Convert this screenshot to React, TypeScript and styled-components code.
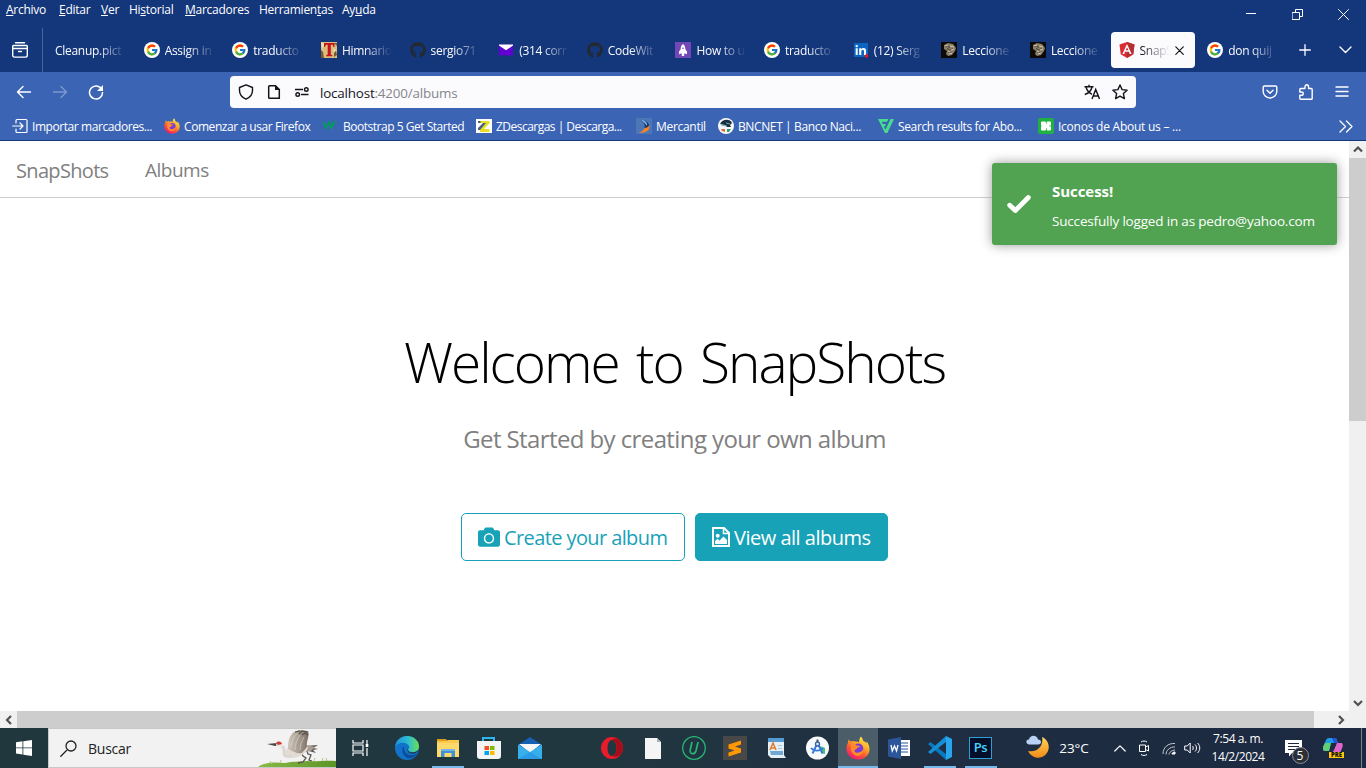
import React from 'react';
import styled, { createGlobalStyle, css } from 'styled-components';
import { FcGoogle } from 'react-icons/fc';
import { FaGithub, FaCamera } from 'react-icons/fa';

const GlobalStyle = createGlobalStyle`
  * { box-sizing: border-box; }
  body {
    margin: 0;
    overflow: hidden;
    font-family: "Open Sans", "Noto Sans", sans-serif;
    background: #fff;
  }
  svg { display: block; flex: none; }
`;

/* ---------- layout ---------- */

const Screen = styled.div`
  width: 1366px;
  height: 768px;
  display: flex;
  flex-direction: column;
  overflow: hidden;
`;

const Label = styled.span<{ $size?: number; $ls?: number; $w?: number; $color?: string }>`
  flex: none;
  white-space: pre;
  font-size: ${p => p.$size ?? 12}px;
  letter-spacing: ${p => p.$ls ?? -0.3}px;
  ${p => p.$w && css`width: ${p.$w}px;`}
  ${p => p.$color && css`color: ${p.$color};`}
  u { text-underline-offset: 1px; text-decoration-thickness: 1px; }
`;

const TitleBar = styled.header`
  height: 28px;
  flex: none;
  background: #14367a;
  color: #fff;
  display: flex;
  justify-content: space-between;
`;

const MenuList = styled.nav`
  display: flex;
  height: 20px;
  line-height: 20px;
  padding-left: 6px;
`;

const WindowButtons = styled.div`
  display: flex;
  width: 138px;
`;

const WindowButton = styled.div`
  width: 46px;
  height: 28px;
  display: flex;
  align-items: center;
  justify-content: center;
`;

const TabStrip = styled.div`
  height: 44px;
  flex: none;
  background: #14367a;
  color: #fff;
  display: flex;
  align-items: center;
`;

const FirefoxView = styled.div`
  width: 43px;
  height: 44px;
  flex: none;
  padding-left: 12px;
  display: flex;
  align-items: center;
  border-right: 1px solid #4766a0;
  margin-right: 4px;
`;

const Tab = styled.div<{ $active?: boolean }>`
  width: 84.64px;
  height: 36px;
  flex: none;
  margin-right: 4px;
  padding-left: 8px;
  display: flex;
  align-items: center;
  gap: 5px;
  border-radius: 4px;
  color: ${p => (p.$active ? '#15141a' : '#fbfbfe')};
  background: ${p => (p.$active ? '#fbfbfe' : 'transparent')};
`;

const TabTitle = styled.span<{ $w: number }>`
  width: ${p => p.$w}px;
  flex: none;
  white-space: pre;
  font-size: 12px;
  line-height: 20px;
  padding-top: 2px;
  letter-spacing: -0.28px;
  mask-image: linear-gradient(to left, transparent, #000 28px);
`;

const TabAction = styled.div<{ $w: number }>`
  width: ${p => p.$w}px;
  flex: none;
  display: flex;
  justify-content: center;
`;

const NavToolbar = styled.div`
  height: 40px;
  flex: none;
  background: #3c64b4;
  display: flex;
  align-items: center;
  color: #fff;
`;

const NavButtons = styled.div`
  display: flex;
  width: 230px;
  gap: 20px;
  padding-left: 16px;
`;

const UrlBar = styled.div`
  width: 906px;
  height: 32px;
  border-radius: 4px;
  background: #fbfbfe;
  color: #15141a;
  display: flex;
  align-items: center;
  padding: 0 8px;
  gap: 12px;
`;

const UrlText = styled.div`
  flex: 1;
  margin-left: -2px;
  padding-top: 2px;
  font-size: 13.4px;
  letter-spacing: -0.18px;
  color: #85858c;
  b { font-weight: 400; color: #15141a; }
`;

const ToolbarEnd = styled.div`
  flex: 1;
  display: flex;
  gap: 20px;
  justify-content: flex-end;
  padding-right: 16px;
`;

const BookmarkBar = styled.div`
  height: 29px;
  flex: none;
  background: #3c64b4;
  border-bottom: 1px solid #14367a;
  color: #fff;
  display: flex;
  align-items: center;
  padding: 0 13px 0 12px;
`;

const Bookmark = styled.div<{ $w: number }>`
  width: ${p => p.$w}px;
  flex: none;
  display: flex;
  align-items: center;
  gap: 4px;
`;

const Spacer = styled.div`
  flex: 1;
`;

const Viewport = styled.div`
  height: 570px;
  flex: none;
  display: flex;
`;

const Page = styled.main`
  position: relative;
  width: 1349px;
  background: #fff;
  display: flex;
  flex-direction: column;
  align-items: center;
`;

const SiteNav = styled.nav`
  align-self: stretch;
  height: 57px;
  flex: none;
  border-bottom: 1px solid #ccc;
  display: flex;
  align-items: center;
  padding: 2px 0 0 16px;
  color: #808080;
`;

const Headline = styled.h1`
  margin: 122px 0 0;
  height: 84px;
  line-height: 84px;
  font-size: 55px;
  font-weight: 300;
  letter-spacing: -2px;
  word-spacing: 5px;
  color: #000;
  white-space: nowrap;
`;

const Tagline = styled.p`
  margin: 17px 0 0;
  height: 36px;
  line-height: 36px;
  font-size: 24px;
  letter-spacing: -0.6px;
  color: #808080;
  white-space: nowrap;
`;

const Actions = styled.div`
  margin-top: 56px;
  display: flex;
  gap: 10px;
`;

const ActionButton = styled.button<{ $filled?: boolean; $w: number }>`
  width: ${p => p.$w}px;
  height: 48px;
  padding: 0 0 0 16px;
  display: flex;
  align-items: center;
  gap: 4px;
  border: 1px solid #17a2b8;
  border-radius: 5px;
  font-family: inherit;
  background: ${p => (p.$filled ? '#17a2b8' : '#fff')};
  color: ${p => (p.$filled ? '#fff' : '#17a2b8')};
`;

const Toast = styled.aside`
  position: absolute;
  top: 22px;
  right: 12px;
  width: 345px;
  height: 82px;
  border-radius: 3px;
  background: #51a351;
  box-shadow: 0 0 12px #999;
  color: #fff;
  display: flex;
  align-items: center;
  padding-left: 15px;
  gap: 21px;
`;

const ToastBody = styled.div`
  display: flex;
  flex-direction: column;
  line-height: 20px;
  gap: 10px;
  padding-top: 4px;
`;

const ToastTitle = styled.strong`
  font-size: 15px;
  letter-spacing: -0.05px;
`;

const Scroll = styled.div<{ $vertical?: boolean }>`
  flex: none;
  display: flex;
  flex-direction: ${p => (p.$vertical ? 'column' : 'row')};
  background: #f0f0f0;
  width: ${p => (p.$vertical ? '17px' : '100%')};
  height: ${p => (p.$vertical ? '570px' : '17px')};
  justify-content: space-between;
`;

const ScrollArrow = styled.div`
  width: 17px;
  height: 17px;
  display: flex;
  align-items: center;
  justify-content: center;
`;

const ScrollTrack = styled.div`
  flex: 1;
`;

const Thumb = styled.div<{ $length: number; $vertical?: boolean }>`
  background: #cdcdcd;
  width: ${p => (p.$vertical ? '17px' : `${p.$length}px`)};
  height: ${p => (p.$vertical ? `${p.$length}px` : '17px')};
`;

const Taskbar = styled.footer`
  height: 40px;
  flex: none;
  display: flex;
  color: #fff;
  background: linear-gradient(90deg, #20373e 0%, #213740 45%, #1f2e42 68%, #1c2941 100%);
`;

const TaskSlot = styled.div<{ $w?: number; $active?: boolean; $line?: string; $pad?: string }>`
  width: ${p => p.$w ?? 41}px;
  height: 40px;
  flex: none;
  padding: ${p => p.$pad ?? '0'};
  display: flex;
  align-items: center;
  justify-content: center;
  background-color: ${p => (p.$active ? '#4c5d6a' : 'transparent')};
  ${p => p.$line && css`
    background-image: linear-gradient(#76b9ed, #76b9ed);
    background-size: ${p.$line} 2px;
    background-position: center bottom;
    background-repeat: no-repeat;
  `}
`;

const SearchBox = styled.div`
  width: 288px;
  height: 40px;
  background: #f2f2f2;
  border: 1px solid #c4c8c9;
  border-right: 0;
  color: #222;
  display: flex;
  align-items: center;
  padding-left: 11px;
  gap: 11px;
`;

const Clock = styled.div`
  width: 68px;
  display: flex;
  flex-direction: column;
  align-items: center;
  justify-content: center;
  line-height: 18px;
`;

const DesktopEdge = styled.div`
  width: 5px;
  border-left: 1px solid #7b8391;
`;

/* ---------- icons ---------- */

const Stroke = ({ w = 16, h = 16, sw = 1.2, d, color = 'currentColor' }: { w?: number; h?: number; sw?: number; d: string; color?: string }) => (
  <svg width={w} height={h} viewBox={`0 0 ${w} ${h}`} fill="none" stroke={color} strokeWidth={sw} strokeLinecap="round" strokeLinejoin="round"><path d={d} /></svg>
);

const FileImage = () => (
  <svg width="18" height="20" viewBox="0 0 18 20"><path d="M1 1h11l5 5v13H1z" fill="none" stroke="currentColor" strokeWidth="2" /><path d="M11.500 1v5.500H17" fill="none" stroke="currentColor" strokeWidth="1.500" /><circle cx="5.700" cy="8.700" r="2" fill="currentColor" /><path d="M3 17v-3l2.500-2.300 2 1.800 4-4L15 13v4z" fill="currentColor" /></svg>
);

const Google = () => (
  <svg width="16" height="16" viewBox="0 0 16 16"><circle cx="8" cy="8" r="8" fill="#fff" /><g transform="translate(1.500 1.500)"><FcGoogle size={13} /></g></svg>
);

const Himnario = () => (
  <svg width="16" height="16" viewBox="0 0 16 16"><path fill="#d8bd7c" d="M0 0h16v16H0z" /><path fill="#795b2c" d="M0 8l2 2 1 6H0zM13 1h3v3l-2-2zM13 10l2-1 1 4-3 2z" /><path fill="#f2dfae" d="M0 0l4 2-3 5zM12 6l3 2-2 3z" /><path fill="#c3141b" d="M3 1h10.500v4h-1l-.8-2.200H9.800v9.700l1.500.8v1H5.200v-1l1.500-.8V2.800H4.800L4 5H3z" /></svg>
);

const YahooMail = () => (
  <svg width="16" height="16" viewBox="0 0 16 16"><path fill="#6001d2" d="M1 2.500h14v11H1z" /><path fill="#fff" d="M1 2.500h14v1L8 8.300 1 3.500z" /></svg>
);

const Rocket = () => (
  <svg width="16" height="16" viewBox="0 0 16 16"><path fill="#7248b9" d="M0 0h16v16H0z" /><path fill="#fff" d="M8 2c2 1.600 2.400 3.400 2.300 5.300L12 9.500v2.700l-2-.7H6l-2 .7V9.500l1.700-2.200C5.600 5.400 6 3.600 8 2zM6.800 11h2.400v3H6.800z" /><circle cx="8" cy="6.300" r=".8" fill="#7248b9" /></svg>
);

const LinkedIn = () => (
  <svg width="16" height="16" viewBox="0 0 16 16"><path fill="#0a66c2" d="M1 1h14v14H1z" /><path fill="#fff" d="M2.700 6.200h2V13h-2zM6.200 6.200h2v1c.5-.8 1.200-1.200 2.200-1.200 2 0 2.700 1.200 2.700 3.200V13H11V9.500c0-1-.3-1.700-1.200-1.700-1 0-1.500.7-1.500 1.700V13H6.200z" /><circle cx="3.700" cy="4.100" r="1.200" fill="#fff" /><circle cx="13.500" cy="14" r="1.800" fill="#f01414" /></svg>
);

const Statue = () => (
  <svg width="16" height="16" viewBox="0 0 16 16"><path fill="#0d0a08" d="M0 0h16v16H0z" /><path fill="#8b8069" d="M3 3l4-2 5 1 3 4-1 3-3 4-4 1-2-2 1-3-3-2z" /><path d="M4 5l3-1 2 1-3 2 3 1 3-2M7 10l2 1 2-1" stroke="#4d4435" strokeWidth=".8" fill="none" /><path d="M4 4l3-1M9 4l4 1M7 9l2 1M10 8l3-1M8 12l3-1" stroke="#d0c6ab" fill="none" /></svg>
);

const Angular = () => (
  <svg width="16" height="16" viewBox="0 0 16 16"><path fill="#dd2b32" d="M8 0l7.500 2.600-1.200 9.600L8 16l-6.300-3.800L.5 2.600z" /><path fill="#b52e31" d="M8 0l7.500 2.600-1.200 9.600L8 16z" /><path fill="#fff" fillRule="evenodd" d="M8 2l4.600 10h-1.800l-.9-2.300H6.100L5.200 12H3.400zM8 5.200L6.700 8.300h2.600z" /></svg>
);

const Firefox = ({ size = 16 }: { size?: number }) => (
  <svg width={size} height={size} viewBox="0 0 24 24">
    <defs>
      <linearGradient id="ffBody" x1="0.8" y1="0" x2="0.2" y2="1"><stop offset="0" stopColor="#fff04a" /><stop offset=".35" stopColor="#ffad28" /><stop offset=".65" stopColor="#ff5034" /><stop offset="1" stopColor="#ec1280" /></linearGradient>
    </defs>
    <path fill="url(#ffBody)" d="M15 .5c1.200 1.300 1.900 2.700 2.100 4.200 2 .8 2.700 1.800 3.300 2.700l.2-2.200c3.400 4.500 4 9.700 1 13.800C17.400 24.600 8 25.200 3.300 20-.6 15.700.2 9.600 2 6.800l.3-3.300 2.500 2.100C6 4.900 7.400 4.900 8.500 5.500c2-.2 3.300-.1 4.500.7 0-2 .5-4 2-5.700z" />
    <circle cx="12.300" cy="12.500" r="5" fill="#7b3bd9" />
    <path fill="#ff8a2c" d="M5 8.500c2.500-1.600 4.500-.2 5.500 1l3.500.5c.1 1.100-2.100 1.500-2.900 2-.6 1.900-2.700 1.300-2.600 2.900.4 1.900 3.600 2.500 5.300 1.100 1.500-.1 2.800-1.200 3.300-2.700 1.200 3-1.500 6.500-5 6.700C7 20 3.500 15 5 8.500z" />
  </svg>
);

const W3 = () => (
  <svg width="17" height="16" viewBox="0 0 17 16"><path d="M1.500 4l2.500 6L7 4.500l2.500 5.500L12 4" fill="none" stroke="#069a62" strokeWidth="2" /><path d="M12 3.500h2.500l-1 1.500 1 1" fill="none" stroke="#069a62" strokeWidth=".8" /></svg>
);

const ZIcon = () => (
  <svg width="16" height="16" viewBox="0 0 16 16"><path fill="#fff" d="M0 1h16v14H0z" /><path fill="#4a5f86" d="M2 3h11v2l-7 7H2v-2l5-5H2z" /><path fill="#e8e020" d="M4.500 3h9v2l-5.500 6h5.500v3H4v-2l6-7H4.500z" /></svg>
);

const Mercantil = () => (
  <svg width="16" height="16" viewBox="0 0 16 16"><path fill="#4c76b5" d="M0 0h16v16H0z" /><path fill="#12366e" d="M4 1c7 1 10 5 9 9l-5 2c2-5 0-8-4-11z" /><path fill="#7db5ee" d="M4 1c5 1 8 4 7 7-2-3-4-5-7-7z" /><path fill="#f58327" d="M13.500 7c1 5-3 8-11 8 3-1 5-3 6-5 2 0 4-1 5-3z" /></svg>
);

const Bnc = () => (
  <svg width="16" height="16" viewBox="0 0 16 16"><circle cx="8" cy="8" r="8" fill="#f6f7f8" /><path fill="#182d3f" d="M2 6c2-5 10-6 12-1l-2 2 1 2H9L7 7z" /><path d="M3 7l6 1M8 5l4 1" stroke="#68b2ab" /><path fill="#e46c35" d="M3 11h4v3L4 13z" /><path fill="#2f9c70" d="M9 11h4l-2 3H9z" /></svg>
);

const VF = () => (
  <svg width="16" height="16" viewBox="0 0 16 16"><path fill="#48dd8c" d="M0 1h10.500L9 3.800H3.800L4.700 6H8L7 8.500H5.800l1.700 3.300L12.500 1H16L9.300 15H7z" /></svg>
);

const Icons8 = () => (
  <svg width="16" height="16" viewBox="0 0 16 16"><rect width="16" height="16" rx="2" fill="#1fb141" /><g fill="#fff"><rect x="3" y="3.500" width="5" height="4.600" rx="1" /><rect x="8.600" y="3.500" width="4.400" height="4.300" rx="1" /><rect x="3" y="8" width="5" height="4.500" rx="1" /><rect x="8.600" y="8.300" width="4.400" height="4.200" rx="1" /><path d="M5 6h6v4H5z" /></g></svg>
);

const Translate = () => (
  <svg width="17" height="16" viewBox="0 0 17 16" fill="none" stroke="currentColor" strokeWidth="1.400"><path d="M1.500 2.700h9M6 .7v2M3 3c1 3.800 3 5.800 6 7.300M9 3C8.300 6.500 5.500 9.200 1.800 10.500M9 15l3.700-9.500L16.500 15M10.500 12h4.500" /></svg>
);

const Crane = () => (
  <svg width="78" height="38" viewBox="0 0 78 38">
    <defs>
      <linearGradient id="grass" x1="0" x2="1"><stop offset="0" stopColor="#8aba45" /><stop offset="1" stopColor="#5d9427" /></linearGradient>
      <linearGradient id="wing" x1="0" x2="1"><stop offset="0" stopColor="#cfc5ba" /><stop offset=".6" stopColor="#a1968a" /><stop offset="1" stopColor="#786e64" /></linearGradient>
    </defs>
    <path fill="url(#grass)" d="M0 38c7-5 17-5 27-4 8-2 15-1 22-2 10 1 17-1 29 0v6z" />
    <path d="M56 32l1-3M64 32l1-3M69 32l-1-3M14 35l-2-3M22 34l1-3" stroke="#b1cf86" />
    <path d="M43 23l2 4 3 2-3 4-5 1M49 22l1 3 3 1-2 5 3 1" fill="none" stroke="#5a5450" strokeWidth="1.300" />
    <path fill="#5a534c" d="M47 17l13-1-5 3 5 1-5 1 3 3-11-3z" />
    <path fill="#a99e92" d="M44 15l13 3-4 4-8 1z" />
    <path fill="#e3dcd4" d="M29 20c3-5 10-7 17-5l4 3c-1 6-9 11-16 11-4 0-8-2-8-5z" />
    <path fill="url(#wing)" d="M30 20c0-8 1-13 6-17l5-2 9 1c2 5-2 10-1 16l-5 6c-5 1-8-1-14-4z" />
    <path d="M33 18c1-6 2-10 6-13M37 21c0-6 2-11 5-15M42 21c0-5 2-9 4-13" fill="none" stroke="#e0d7cc" strokeWidth=".6" />
    <path d="M37 3l5-1M41 5l3-3 5 1M44 6l3-2 3 2" fill="none" stroke="#56504a" strokeWidth="1.200" />
    <path d="M23 17c4 1 3 4 3 7 0 3 2 4 6 3" fill="none" stroke="#ddd7d1" strokeWidth="3" strokeLinecap="round" />
    <path fill="#4a4642" d="M9 15l10-1 2 2-4 1z" />
    <path fill="#eee9e5" d="M18 15c1-2 6-2 7 1l-2 3-4-1z" />
    <path fill="#cf3a36" d="M18 14c2-2 5-2 6 1l-4 1z" />
  </svg>
);

const TaskView = () => (
  <svg width="17" height="16" viewBox="0 0 17 16" fill="none" stroke="#fff" strokeWidth="1.200"><path d="M1 0v3h10V0M1 16v-3h10v3M1 5h10v6H1zM15 0v4M15 8v8" /><path d="M13.700 4h2.600v3h-2.600z" fill="#fff" stroke="none" /></svg>
);

const Edge = () => (
  <svg width="24" height="24" viewBox="0 0 24 24">
    <defs><linearGradient id="edgeTop" x1="0" x2="1"><stop offset="0" stopColor="#1b91dc" /><stop offset=".55" stopColor="#2ebdd1" /><stop offset="1" stopColor="#68df52" /></linearGradient></defs>
    <circle cx="12" cy="12" r="12" fill="#1172c7" />
    <path fill="url(#edgeTop)" d="M0 11C1 4 6 0 12 0c7 0 12 5 12 10 0 4-3 6-6.500 6-3 0-4.500-1.300-4.500-2.500 1-1 1.500-2 1-3.500C12.500 6 4 5 0 11z" />
    <path fill="#0b4c9c" d="M9 10c-3 3-2 9 3 12 4 1 8-1 10-4-7 3-14 0-13-8z" />
    <path fill="#213740" d="M13.500 10.500c-1.500 2-.5 5.500 3 6 3 .3 5.500-.8 7.200-2.700-1 3-4 4.200-6.700 4-3.500-.3-6-3.300-3.500-7.300z" />
  </svg>
);

const Explorer = () => (
  <svg width="22" height="20" viewBox="0 0 22 20"><path fill="#dd9b1e" d="M0 1h9l2 3H0z" /><path fill="#ffd96b" d="M0 3h22v16H0z" /><path fill="#f9c94c" d="M0 3h9l2-1h11v3H0z" /><path fill="#3f91d8" d="M4 11h14v8h-3.500v-4h-7v4H4z" /><path fill="#71b4e8" d="M4 11h14v2H4z" /></svg>
);

const Store = () => (
  <svg width="24" height="24" viewBox="0 0 24 24"><path d="M6 6V2h11v4" fill="none" stroke="#2fb5ed" strokeWidth="2" /><path fill="#f3f4f5" d="M0 5h24v15c0 2-1 3-3 3H3c-2 0-3-1-3-3z" /><path fill="#f25022" d="M7.500 10H12v4H7.500z" /><path fill="#7fba00" d="M13 10h4.500v4H13z" /><path fill="#00a4ef" d="M7.500 15H12v4H7.500z" /><path fill="#ffb900" d="M13 15h4.500v4H13z" /></svg>
);

const Mail = () => (
  <svg width="24" height="23" viewBox="0 0 24 23"><path fill="#1560b5" d="M0 8L12 0l12 8v4H0z" /><path fill="#f4f6f8" d="M1 7h22L12 16z" /><path fill="#37afea" d="M0 7.500L12 15l12-7.500V22H0z" /><path fill="#2a9be4" d="M0 22l12-7 12 7z" /></svg>
);

const Opera = () => (
  <svg width="22" height="22" viewBox="0 0 22 22"><path fill="#e81c2b" fillRule="evenodd" d="M11 0a11 11 0 100 22 11 11 0 000-22zm0 3c3 0 4.500 3.800 4.500 8S14 19 11 19s-4.500-3.800-4.500-8S8 3 11 3z" /><path fill="#a60d1b" d="M11 3c3-2 7-2 8 1 4 5 4 10 0 14-2 2-5 2-8 1 3 0 4.500-3.800 4.500-8S14 3 11 3z" /></svg>
);

const Doc = () => (
  <svg width="16" height="21" viewBox="0 0 16 21"><path fill="#f5f5f5" d="M0 0h12l4 4v17H0z" /><path fill="#aeb3b5" d="M12 0l4 4h-4z" /></svg>
);

const UninstallerIcon = () => (
  <svg width="24" height="24" viewBox="0 0 24 24" fill="none" stroke="#25b774"><circle cx="12" cy="12" r="11.300" strokeWidth="1.300" /><path d="M10 6l-1.800 8c-.8 4.500 4.500 5 5.700 1l2.200-9" strokeWidth="1.700" /></svg>
);

const Sublime = () => (
  <svg width="24" height="24" viewBox="0 0 24 24"><path fill="#484848" d="M0 0h24v24H0z" /><path fill="#ff9800" d="M5.500 8.500L18 4.500v4l-6 2 6 2v4L5.500 20.500v-4l6-2-6-2z" /></svg>
);

const WordPad = () => (
  <svg width="20" height="22" viewBox="0 0 20 22"><path fill="#e4eff6" d="M2 1h16v17l2 3H5l-3-3z" /><path fill="#549bd1" d="M2 1h16v4H2z" /><path fill="#a7c7da" d="M12 8h4v1h-4zM12 11h4v1h-4z" /><path fill="#6da9d4" d="M4 14h13v4H5z" /><path d="M4 13l3-7 3 7M5 11h4" fill="none" stroke="#e17b2d" strokeWidth="1.500" /></svg>
);

const AndroidStudio = () => (
  <svg width="23" height="24" viewBox="0 0 23 24"><circle cx="11.500" cy="12" r="11.500" fill="#f9fafb" /><path fill="#44c27c" d="M14 10l5 2v6l-4-1z" /><path d="M11.500 7L6.500 17.500M11.500 7l5 10.500M5 12c3 3.500 9 3.500 12 0" fill="none" stroke="#3978dc" strokeWidth="1.900" /><circle cx="11.500" cy="8" r="2" fill="#dbe8fb" stroke="#3c62a8" strokeWidth="1.300" /><path d="M11.500 3.500V6" stroke="#455568" strokeWidth="2" /></svg>
);

const Word = () => (
  <svg width="22" height="22" viewBox="0 0 22 22"><path fill="#fff" d="M12 3h10v16H12z" /><path stroke="#2b579a" d="M13 6h7M13 9h7M13 12h7M13 15h7" /><path fill="#2b579a" d="M0 2.500L13 0v22L0 19.500z" /><path d="M3 8l1.300 6L6.500 9l2 5L10 8" fill="none" stroke="#fff" strokeWidth="1.300" /></svg>
);

const VsCode = () => (
  <svg width="24" height="24" viewBox="0 0 24 24"><path fill="#0879bf" d="M0 8l2.500-2L18 18v6z" /><path fill="#168ed5" d="M0 16l2.500 2L18 6V0z" /><path fill="#27a5ed" d="M18 0l6 3v18l-6 3z" /></svg>
);

const PhotoshopBox = styled.div`
  width: 23px;
  height: 22px;
  border: 1px solid #2f9fd4;
  background: #041029;
  color: #4bd0ff;
  font-size: 13px;
  line-height: 19px;
  font-weight: 600;
  letter-spacing: -0.3px;
  text-align: center;
`;

const Weather = () => (
  <svg width="24" height="24" viewBox="0 0 24 24"><defs><linearGradient id="moon" x1="0" y1="0" x2="0" y2="1"><stop offset="0" stopColor="#ffd55a" /><stop offset="1" stopColor="#f08a18" /></linearGradient></defs><path fill="url(#moon)" d="M16 2c9 4 9 16 0 20-5 2-11 0-14-6 9 2 16-5 14-14z" /><path fill="#b9d2f4" d="M3 9.500C-1 8.500 0 4 3 4.500 4-.5 11-.5 12 4.500c4 0 4 5 0 5z" /></svg>
);

const MeetNow = () => (
  <svg width="12" height="16" viewBox="0 0 12 16" fill="none" stroke="#fff"><path d="M1.500 5h6v6.500h-6zM7.500 7l3-1.500V11l-3-1.500M3 2c2-1.300 4-1.300 6 0M3 14.500c2 1.300 4 1.300 6 0" /></svg>
);

const Wifi = () => (
  <svg width="14" height="14" viewBox="0 0 14 14" fill="none" stroke="#c5cbd3"><path d="M1 13C1 6.500 6 2 13 2.500M4 13.500c0-4 4-8 9-7.500M7 13.500c0-2 3-4.500 6-4.500" /><path d="M10 13c0-1 1-2 3-2v2z" fill="#fff" stroke="#fff" /></svg>
);

const Volume = () => (
  <svg width="17" height="14" viewBox="0 0 17 14" fill="none" stroke="#fff"><path d="M.7 5h2.500l3-3v10l-3-3H.700zM8.500 5c1 1 1 3 0 4M11 3.500c2 2 2 5 0 7M13.500 2c3 3 3 7 0 10" /></svg>
);

const NoticeWrap = styled.div`
  position: relative;
  width: 17px;
  height: 17px;
`;

const NoticeBadge = styled.span`
  position: absolute;
  left: 7px;
  top: 7px;
  width: 17px;
  height: 17px;
  border-radius: 50%;
  border: 1px solid #8b8f96;
  background: #2d3036;
  font-size: 12px;
  line-height: 15px;
  text-align: center;
`;

const CopilotWrap = styled.div`
  position: relative;
  width: 22px;
  height: 22px;
`;

const PreBadge = styled.span`
  position: absolute;
  left: 6px;
  bottom: 1px;
  width: 15px;
  height: 6px;
  background: #ffc60a;
  color: #111;
  font-size: 6px;
  line-height: 6px;
  font-weight: 800;
  text-align: center;
`;

const Chevron = ({ dir }: { dir: 'up' | 'down' | 'left' | 'right' }) => {
  const paths = { up: 'M1 6.500L5 2.500 9 6.500', down: 'M1 3L5 7 9 3', left: 'M7 1L3 5l4 4', right: 'M3 1l4 4-4 4' };
  return <svg width="10" height="10" viewBox="0 0 10 10" fill="none" stroke="#505050" strokeWidth="2.200"><path d={paths[dir]} /></svg>;
};

/* ---------- data ---------- */

const menus: [string, string, string, number][] = [
  ['', 'A', 'rchivo', 53], ['', 'E', 'ditar', 42], ['', 'V', 'er', 28], ['Hi', 's', 'torial', 56],
  ['', 'M', 'arcadores', 74], ['Herramien', 't', 'as', 83], ['Ay', 'u', 'da', 40],
];

const Hub = () => <FaGithub size={16} color="#24292f" />;

const tabs: { title: string; icon?: React.ReactNode; active?: boolean }[] = [
  { title: 'Cleanup.pict' },
  { title: 'Assign in', icon: <Google /> },
  { title: 'traducto', icon: <Google /> },
  { title: 'Himnario', icon: <Himnario /> },
  { title: 'sergio71', icon: <Hub /> },
  { title: '(314 corr', icon: <YahooMail /> },
  { title: 'CodeWit', icon: <Hub /> },
  { title: 'How to u', icon: <Rocket /> },
  { title: 'traducto', icon: <Google /> },
  { title: '(12) Serg', icon: <LinkedIn /> },
  { title: 'Leccione', icon: <Statue /> },
  { title: 'Leccione', icon: <Statue /> },
  { title: 'SnapS', icon: <Angular />, active: true },
  { title: 'don quij', icon: <Google /> },
];

const bookmarks: { title: string; icon: React.ReactNode; w: number; ls: number }[] = [
  { title: 'Importar marcadores...', w: 152, ls: -0.43, icon: <Stroke d="M4 5V2.500c0-.6.400-1 1-1h9c.6 0 1 .4 1 1v11c0 .6-.4 1-1 1H5c-.6 0-1-.4-1-1V11M.7 8h10M8 5l3 3-3 3" /> },
  { title: 'Comenzar a usar Firefox', w: 158, ls: -0.43, icon: <Firefox /> },
  { title: 'Bootstrap 5 Get Started', w: 154, ls: -0.48, icon: <W3 /> },
  { title: 'ZDescargas | Descarga...', w: 160, ls: -0.52, icon: <ZIcon /> },
  { title: 'Mercantil', w: 82, ls: -0.3, icon: <Mercantil /> },
  { title: 'BNCNET | Banco Naci...', w: 160, ls: -0.38, icon: <Bnc /> },
  { title: 'Search results for Abo...', w: 160, ls: -0.36, icon: <VF /> },
  { title: 'Iconos de About us – ...', w: 150, ls: -0.24, icon: <Icons8 /> },
];

/* ---------- app ---------- */

export default function App() {
  return (
    <Screen>
      <GlobalStyle />
      <TitleBar>
        <MenuList>
          {menus.map(([a, key, b, w]) => <Label key={a + key + b} $w={w} $ls={-0.26}>{a}<u>{key}</u>{b}</Label>)}
        </MenuList>
        <WindowButtons>
          <WindowButton><Stroke w={10} h={10} sw={1} d="M0 4.500h10" /></WindowButton>
          <WindowButton><Stroke w={11} h={11} sw={1} d="M.5 3.500h7v7h-7zM3.500 3V.5h7v7H8" /></WindowButton>
          <WindowButton><Stroke w={11} h={11} sw={1} d="M.5.5l10 10M10.500.5l-10 10" /></WindowButton>
        </WindowButtons>
      </TitleBar>

      <TabStrip>
        <FirefoxView><Stroke sw={1.4} d="M3.500.7h9M1.500 3.500h13c.5 0 .8.300.8.800v9c0 1-.8 1.800-1.800 1.800h-11C1.500 15.100.7 14.300.7 13.300v-9c0-.5.3-.8.8-.8zM.8 6.500h14.400M6.500 9.500h3" /></FirefoxView>
        {tabs.map((t, i) => (
          <Tab key={i} $active={t.active}>
            {t.icon}
            <TabTitle $w={t.active ? 30 : t.icon ? 50 : 71}>{t.title}</TabTitle>
            {t.active && <Stroke w={9} h={9} d="M.8.8l7.500 7.500M8.300.8L.8 8.300" />}
          </Tab>
        ))}
        <TabAction $w={35}><Stroke w={12} h={12} sw={1.3} d="M6 .7v10.600M.7 6h10.600" /></TabAction>
        <TabAction $w={45}><Stroke w={13} h={8} sw={1.4} d="M1 1l5.500 5.500L12 1" /></TabAction>
      </TabStrip>

      <NavToolbar>
        <NavButtons>
          <Stroke sw={1.4} d="M1.500 8h13M7 2.500L1.500 8 7 13.500" />
          <Stroke sw={1.4} color="#7d98cf" d="M1.500 8h13M9 2.500L14.500 8 9 13.500" />
          <svg width="16" height="16" viewBox="0 0 16 16" fill="none" stroke="#fff" strokeWidth="1.500"><path d="M13.800 5.500A6.500 6.500 0 1014.500 8" /><path fill="#fff" stroke="none" d="M15 1v6H9z" /></svg>
        </NavButtons>
        <UrlBar>
          <Stroke sw={1.4} d="M8 .8l6.500 2.700v3C14.500 10.500 12 13.500 8 15.200 4 13.500 1.500 10.500 1.500 6.500v-3z" />
          <svg width="16" height="16" viewBox="0 0 16 16"><path d="M3.500 1.700h6L13.300 5.500v8.800H3.500c-.5 0-.8-.3-.8-.8v-11c0-.5.3-.8.8-.8z" fill="none" stroke="#15141a" strokeWidth="1.500" /><path d="M9 1v5h5z" fill="#15141a" /></svg>
          <svg width="16" height="16" viewBox="0 0 16 16" fill="none" stroke="#15141a" strokeWidth="1.400"><path d="M1 5.500h8M7 10.500h7.500" /><circle cx="12.300" cy="5.500" r="1.800" /><circle cx="3.700" cy="10.500" r="1.800" /></svg>
          <UrlText><b>localhost</b>:4200/albums</UrlText>
          <Translate />
          <Stroke sw={1.4} d="M8 1l2.100 4.600 5 .6-3.700 3.400 1 5L8 12.100l-4.400 2.500 1-5L.9 6.200l5-.6z" />
        </UrlBar>
        <ToolbarEnd>
          <Stroke sw={1.4} d="M2.500 2h11c.8 0 1.300.5 1.300 1.300V7.500a6.800 6.500 0 01-13.600 0V3.300C1.200 2.500 1.700 2 2.500 2zM5 6.300L8 9.200l3-2.900" />
          <Stroke sw={1.4} d="M5 4.500h2V3c0-3 3.600-3 3.600 0v1.500h2.700c.5 0 .9.300.9.900v9c0 .5-.4.900-.9.900H2.800c-.6 0-1-.4-1-.9v-3.100h1.500c2.600 0 2.600-3.300 0-3.300H1.800V5.400c0-.6.4-.9 1-.9z" />
          <Stroke sw={1.4} d="M2 3h12M2 7.500h12M2 12h12" />
        </ToolbarEnd>
      </NavToolbar>

      <BookmarkBar>
        {bookmarks.map(b => <Bookmark key={b.title} $w={b.w}>{b.icon}<Label $ls={b.ls}>{b.title}</Label></Bookmark>)}
        <Spacer />
        <Stroke w={14} h={13} sw={1.3} d="M1 1l5.500 5.500L1 12M7.500 1L13 6.500 7.500 12" />
      </BookmarkBar>

      <Viewport>
        <Page>
          <SiteNav>
            <Label $size={20} $ls={-0.67} $w={129}>SnapShots</Label>
            <Label $size={19} $ls={-0.5}>Albums</Label>
          </SiteNav>
          <Headline>Welcome to SnapShots</Headline>
          <Tagline>Get Started by creating your own album</Tagline>
          <Actions>
            <ActionButton $w={224}><FaCamera size={22} /><Label $size={20} $ls={-0.6}>Create your album</Label></ActionButton>
            <ActionButton $w={193} $filled><FileImage /><Label $size={20} $ls={-0.5}>View all albums</Label></ActionButton>
          </Actions>
          <Toast>
            <Stroke w={24} h={20} sw={4.800} d="M2.700 11.200L8.300 16.500 21.300 3.500" />
            <ToastBody>
              <ToastTitle>Success!</ToastTitle>
              <Label $size={13.5} $ls={-0.18}>Succesfully logged in as pedro@yahoo.com</Label>
            </ToastBody>
          </Toast>
        </Page>
        <Scroll $vertical>
          <ScrollArrow><Chevron dir="up" /></ScrollArrow>
          <ScrollTrack><Thumb $vertical $length={263} /></ScrollTrack>
          <ScrollArrow><Chevron dir="down" /></ScrollArrow>
        </Scroll>
      </Viewport>

      <Scroll>
        <ScrollArrow><Chevron dir="left" /></ScrollArrow>
        <ScrollTrack><Thumb $length={1297} /></ScrollTrack>
        <ScrollArrow><Chevron dir="right" /></ScrollArrow>
        <ScrollArrow />
      </Scroll>

      <Taskbar>
        <TaskSlot $w={48}>
          <svg width="16" height="16" viewBox="0 0 16 16" fill="#fff"><path d="M0 2.300L6.500 1.300v6.200H0zM7.300 1.200L16 0v7.500H7.300zM0 8.300h6.500v6.300L0 13.600zM7.300 8.300H16V16l-8.700-1.200z" /></svg>
        </TaskSlot>
        <SearchBox>
          <Stroke w={17} h={17} sw={1.3} d="M6.500 10.500L.8 16.200M16 6A5 5 0 116 6a5 5 0 0110 0z" />
          <Label $size={14} $ls={-0.25}>Buscar</Label>
          <Spacer />
          <Crane />
        </SearchBox>
        <TaskSlot $w={50} $pad="0 2px 0 0"><TaskView /></TaskSlot>
        <TaskSlot><Edge /></TaskSlot>
        <TaskSlot $line="32px"><Explorer /></TaskSlot>
        <TaskSlot><Store /></TaskSlot>
        <TaskSlot><Mail /></TaskSlot>
        <TaskSlot />
        <TaskSlot><Opera /></TaskSlot>
        <TaskSlot><Doc /></TaskSlot>
        <TaskSlot><UninstallerIcon /></TaskSlot>
        <TaskSlot><Sublime /></TaskSlot>
        <TaskSlot><WordPad /></TaskSlot>
        <TaskSlot $w={42}><AndroidStudio /></TaskSlot>
        <TaskSlot $w={40} $active $line="100%"><Firefox size={24} /></TaskSlot>
        <TaskSlot><Word /></TaskSlot>
        <TaskSlot $line="32px"><VsCode /></TaskSlot>
        <TaskSlot $line="32px"><PhotoshopBox>Ps</PhotoshopBox></TaskSlot>
        <Spacer />
        <TaskSlot $w={24} $pad="0 0 2px"><Weather /></TaskSlot>
        <TaskSlot $w={48}><Label $size={13.5} $ls={-0.1}>23°C</Label></TaskSlot>
        <TaskSlot $w={32} $pad="0 0 0 12px"><Stroke w={12} h={7} d="M.8 6L6 .8 11.200 6" /></TaskSlot>
        <TaskSlot $w={28}><MeetNow /></TaskSlot>
        <TaskSlot $w={22}><Wifi /></TaskSlot>
        <TaskSlot $w={24}><Volume /></TaskSlot>
        <Clock>
          <Label $ls={-0.4}>7:54 a. m.</Label>
          <Label $ls={-0.44}>14/2/2024</Label>
        </Clock>
        <TaskSlot $w={46} $pad="0 4px 0 0">
          <NoticeWrap>
            <svg width="17" height="17" viewBox="0 0 17 17"><path fill="#fff" d="M0 0h17v13H7l-3 3.500V13H0z" /><path d="M3 3.500h11M3 6.500h11M3 9.500h7" stroke="#1d2a42" strokeWidth="1.200" /></svg>
            <NoticeBadge>5</NoticeBadge>
          </NoticeWrap>
        </TaskSlot>
        <TaskSlot $w={30} $pad="0 0 0 2px">
          <CopilotWrap>
            <svg width="20" height="19" viewBox="0 0 20 19"><path fill="#1b9ce4" d="M6 1h7l2 5H8L6 14H2c-2 0-3-2-2-4l3-7c.5-1.300 1.500-2 3-2z" /><path fill="#62cf75" d="M2 6l6 0-2 8H2c-2 0-2-2-2-4z" /><path fill="#294fdb" d="M9 1h4l2 5h-4z" /><path fill="#df65cb" d="M14 6h4c2 0 2 2 1.500 4L17 16c-.5 1-1.500 2-3 2H8l3-5z" /></svg>
            <PreBadge>PRE</PreBadge>
          </CopilotWrap>
        </TaskSlot>
        <TaskSlot $w={13} />
        <DesktopEdge />
      </Taskbar>
    </Screen>
  );
}
